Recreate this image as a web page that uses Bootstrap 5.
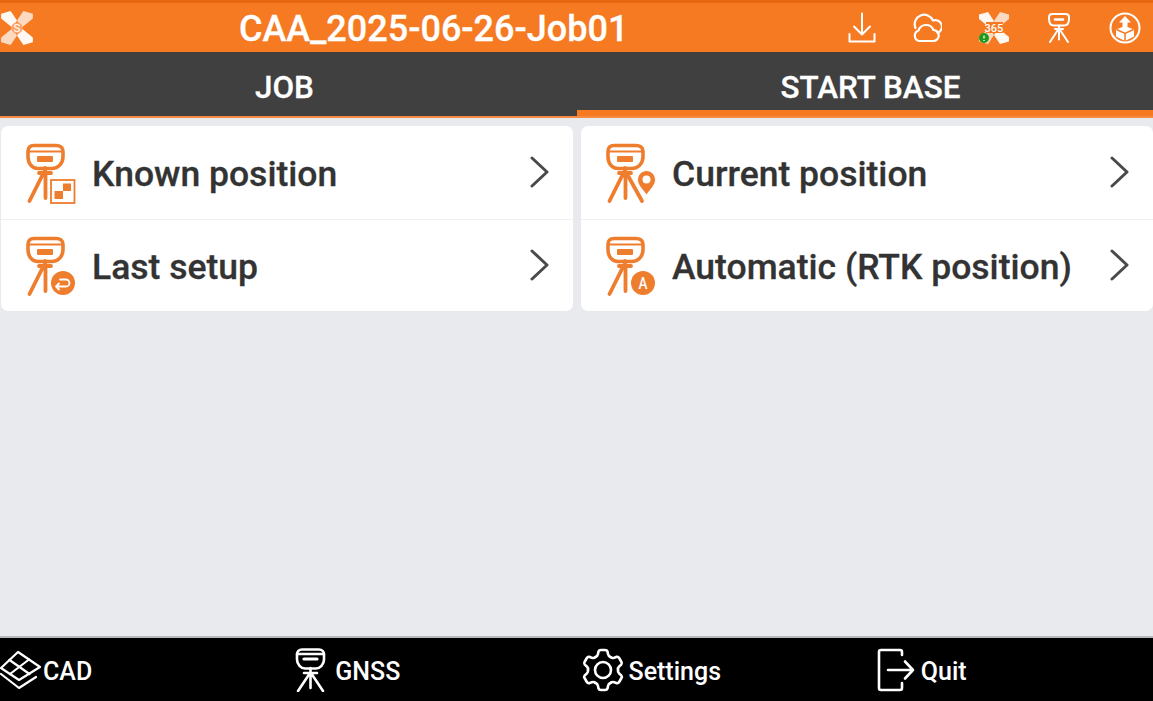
<!DOCTYPE html>
<html lang="en">
<head>
  <meta charset="UTF-8">
  <title>Start Base</title>
  <link href="https://cdn.jsdelivr.net/npm/bootstrap@5.3.0/dist/css/bootstrap.min.css" rel="stylesheet">
  <style>
    html, body { height: 100%; }
    body { font-family: Roboto, "Liberation Sans", sans-serif; background: #e9eaee; overflow: hidden; }
    .app-shell { height: 701px; }
    .top-bar { height: 52px; background: #f57a22; border-top: 3px solid #e8660f; color: #fff; }
    .top-logo { width: 34px; height: 36px; }
    .job-title { font-size: 36px; font-weight: 500; margin-left: 205px; padding-top: 3px; line-height: 1; -webkit-text-stroke: .3px #fff; }
    .top-icons { gap: 36px; margin-right: 11px; }
    .tab-bar { height: 66px; background: #404040; border-bottom: 2px solid #f58a42; color: #fff; }
    .tab-item { font-size: 31.4px; font-weight: 500; padding-top: 8px; -webkit-text-stroke: .3px #fff; }
    .tab-active { box-shadow: inset 0 -6px 0 #f57a22; flex: 0 0 576px; padding-left: 11px; }
    .tab-first { flex: 0 0 577px; padding-right: 8px; }
    .menu-area { gap: 8px; padding: 8px 0 0 1px; }
    .menu-card { flex: 0 0 572px; background: #fff; border-radius: 7px; height: 185px; }
    .menu-row { height: 92.5px; padding-left: 25px; padding-top: 3px; color: #333; }
    .menu-row + .menu-row { border-top: 1px solid #f0f0f2; }
    .row-label { font-size: 35.5px; font-weight: 500; margin-left: 16px; line-height: 1; padding-top: 1px; -webkit-text-stroke: .3px #333; }
    .row-arrow { margin-right: 24px; margin-bottom: 4px; }
    .bottom-bar { height: 65px; background: #000; border-top: 2px solid #b9b9bd; color: #fff; }
    .bottom-item { font-size: 25px; font-weight: 500; }
    .bottom-item span { padding-top: 5px; }
    .pad-gnss { padding-left: 7px; }
    .pad-settings { padding-left: 4px; }
    .pad-quit { padding-left: 12px; }
    .gap-wide { gap: 9px; }
    .gap-thin { gap: 1px; }
    .gap-gear { gap: 4px; }
    .gap-mid { gap: 6px; }
    .spacer-fill { flex: 1 1 auto; min-height: 0; }
  </style>
</head>
<body>
  <svg width="0" height="0" class="d-block">
    <defs>
      <!-- receiver on tripod, orange row icon base -->
      <symbol id="rover" viewBox="0 0 50 62">
        <g fill="none" stroke="#ee7d2e" stroke-linecap="round" stroke-linejoin="round">
          <path stroke-width="3.600" d="M8 2.500h22c4 0 7 2 7 6v5c0 7-5 12-11 12H12C6 25.500 2 20.500 2 13.500v-5c0-4 2-6 6-6z"/>
          <path stroke-width="2.200" d="M3 8.500h33"/>
          <path stroke-width="3.800" d="M19 25v5M13 30h12M17 31 3.500 58M19.500 31v24"/>
        </g>
        <rect x="11" y="13" width="16" height="6" rx="1" fill="#ee7d2e"/>
      </symbol>
      <symbol id="x-mark" viewBox="0 0 32 34">
        <g fill="#fff">
          <path d="M1 3.500 10 1l6 9-4.500 6.500L1 8z" fill-opacity=".95"/>
          <path d="M31 3.500 22 1l-6 9 4.500 6.500L31 8z" fill-opacity=".72"/>
          <path d="M1 30.500 10 33l6-9-4.500-6.500L1 26z" fill-opacity=".72"/>
          <path d="M31 30.500 22 33l-6-9 4.500-6.500L31 26z" fill-opacity=".95"/>
        </g>
      </symbol>
      <!-- one gear tooth, rotated six times -->
      <path id="gear-tooth" d="M14.500 9Q16.500 8.500 17 6L17.500 3.500Q18 2 20 2H24Q26 2 26.500 3.500L27 6Q27.500 8.500 29.500 9"/>
    </defs>
  </svg>

  <div class="app-shell d-flex flex-column">
    <!-- top bar -->
    <div class="top-bar d-flex align-items-center">
      <svg class="top-logo" viewBox="0 0 32 34">
        <use href="#x-mark"/>
        <circle cx="16" cy="17" r="5.500" fill="#f9a56c"/>
        <text x="16" y="21" font-size="11" fill="#fff" text-anchor="middle" font-family="Roboto">S</text>
      </svg>
      <div class="job-title">CAA_2025-06-26-Job01</div>
      <div class="top-icons d-flex align-items-center ms-auto">
        <svg width="28" height="32" viewBox="0 0 28 32" fill="none" stroke="#fff" stroke-width="2" stroke-linecap="round" stroke-linejoin="round"><path d="M14 1.500v21M6 14.500l8 8 8-8M1.500 22v7.500h25V22"/></svg>
        <svg width="30" height="30" viewBox="0 0 30 30" fill="none" stroke="#fff" stroke-width="2.200" stroke-linecap="round" stroke-linejoin="round"><path d="M3.500 15A9 9 0 0 1 21 7.500a6.500 6.500 0 0 1 4.500 12.500"/><path d="M7 28h14a5.500 5.500 0 0 0 .5-11 8 8 0 0 0-15 .5A5.500 5.500 0 0 0 7 28z"/></svg>
        <svg width="32" height="34" viewBox="0 0 32 34">
          <use href="#x-mark"/>
          <rect x="8" y="11" width="17" height="11" fill="#f57a22"/>
          <text x="16" y="20.500" font-size="11" font-weight="500" fill="#fff" text-anchor="middle" font-family="Roboto">365</text>
          <circle cx="6" cy="27" r="5" fill="#1e9a1e"/><path d="M6 24.500v3M6 29v1" stroke="#fff" stroke-width="1.300"/>
        </svg>
        <svg width="26" height="32" viewBox="0 0 26 32" fill="none" stroke="#fff" stroke-linecap="round" stroke-linejoin="round"><path stroke-width="2" d="M6.500 2h13c2 0 3.500 1 3.500 3v2c0 4-2 6.500-5 6.500H8C5 13.500 3 11 3 7V5c0-2 1.500-3 3.500-3z"/><path stroke-width="2.600" d="M9 7.500h8"/><path stroke-width="2" d="M13 13.500v14M12.500 17 4 30M13.500 17 22 30M9 17h8"/></svg>
        <svg width="34" height="32" viewBox="0 0 34 32" fill="none" stroke="#fff"><circle cx="17" cy="16" r="14.500" stroke-width="2"/><path d="M17 4l6 6.500h-3.500V15l6.500 2.500v7L17 29l-9-4.500v-7l6.500-2.500v-4.500H11z" fill="#fff" stroke="none"/><path d="M8.500 17.500l8.500 4 8.500-4M17 21.500V29" stroke="#f57a22" stroke-width="1.500"/></svg>
      </div>
    </div>

    <!-- tabs -->
    <div class="tab-bar d-flex">
      <div class="tab-item tab-first d-flex align-items-center justify-content-center">JOB</div>
      <div class="tab-item tab-active d-flex align-items-center justify-content-center">START BASE</div>
    </div>

    <!-- menu cards -->
    <div class="menu-area d-flex">
      <div class="menu-card">
        <div class="menu-row d-flex align-items-center">
          <svg width="50" height="62" viewBox="0 0 50 62"><use href="#rover"/><rect x="25" y="37" width="23.500" height="23" fill="#fff" stroke="#ee7d2e" stroke-width="1.800"/><rect x="37" y="40.500" width="8" height="7.500" fill="#ee7d2e"/><rect x="28.500" y="48" width="8.500" height="8" fill="#ee7d2e"/></svg>
          <span class="row-label">Known position</span>
          <svg class="row-arrow ms-auto" width="20" height="34" viewBox="0 0 20 34" fill="none" stroke="#4a4a4a" stroke-width="3" stroke-linecap="round" stroke-linejoin="round"><path d="M3 3l15 14L3 31"/></svg>
        </div>
        <div class="menu-row d-flex align-items-center">
          <svg width="50" height="62" viewBox="0 0 50 62"><use href="#rover"/><circle cx="37" cy="47" r="13" fill="#fff"/><circle cx="37" cy="47" r="12" fill="#ee7d2e"/><path d="M30 50.500h10a3.500 3.500 0 0 0 0-7h-6M33 47.500l-3 3 3 3" fill="none" stroke="#fff" stroke-width="1.800" stroke-linecap="round" stroke-linejoin="round"/></svg>
          <span class="row-label">Last setup</span>
          <svg class="row-arrow ms-auto" width="20" height="34" viewBox="0 0 20 34" fill="none" stroke="#4a4a4a" stroke-width="3" stroke-linecap="round" stroke-linejoin="round"><path d="M3 3l15 14L3 31"/></svg>
        </div>
      </div>
      <div class="menu-card">
        <div class="menu-row d-flex align-items-center">
          <svg width="50" height="62" viewBox="0 0 50 62"><use href="#rover"/><path d="M21 31l15 27" stroke="#ee7d2e" stroke-width="3.800" stroke-linecap="round"/><path d="M40.500 52c-5-7-9-10-9-15.500a9 9 0 0 1 18 0c0 5.500-4 8.500-9 15.500z" fill="#ee7d2e" stroke="#fff" stroke-width="1"/><circle cx="40.500" cy="36.500" r="4" fill="#fff"/></svg>
          <span class="row-label">Current position</span>
          <svg class="row-arrow ms-auto" width="20" height="34" viewBox="0 0 20 34" fill="none" stroke="#4a4a4a" stroke-width="3" stroke-linecap="round" stroke-linejoin="round"><path d="M3 3l15 14L3 31"/></svg>
        </div>
        <div class="menu-row d-flex align-items-center">
          <svg width="50" height="62" viewBox="0 0 50 62"><use href="#rover"/><circle cx="37" cy="47" r="13" fill="#fff"/><circle cx="37" cy="47" r="12" fill="#ee7d2e"/><text x="37" y="53" font-size="17" font-weight="500" fill="#fff" text-anchor="middle" font-family="Roboto" textLength="9" lengthAdjust="spacingAndGlyphs">A</text></svg>
          <span class="row-label">Automatic (RTK position)</span>
          <svg class="row-arrow ms-auto" width="20" height="34" viewBox="0 0 20 34" fill="none" stroke="#4a4a4a" stroke-width="3" stroke-linecap="round" stroke-linejoin="round"><path d="M3 3l15 14L3 31"/></svg>
        </div>
      </div>
    </div>

    <div class="spacer-fill"></div>

    <!-- bottom bar -->
    <div class="bottom-bar row g-0 align-items-center">
      <div class="col-3 bottom-item d-flex align-items-center gap-thin">
        <svg width="42" height="40" viewBox="0 0 42 40" fill="none" stroke="#fff" stroke-width="2.200" stroke-linejoin="round" stroke-linecap="round"><path d="M18 2 40 17 19 30 1 18z"/><path d="M9.500 10 29.500 24M29 9.500 10 24"/><path d="M1 24 19 38 36 27"/></svg>
        <span>CAD</span>
      </div>
      <div class="col-3 bottom-item pad-gnss d-flex align-items-center gap-wide">
        <svg width="31" height="44" viewBox="0 0 31 44" fill="none" stroke="#fff" stroke-linecap="round" stroke-linejoin="round"><path stroke-width="2.600" d="M7 1.500h17c3 0 5 2 5 5v5c0 5-4 9-8 9H10c-4 0-8-4-8-9v-5c0-3 2-5 5-5z"/><path stroke-width="3.200" d="M9 11h13"/><path stroke-width="2.600" d="M2 6h27M15.500 20v20M15 25 3 43M16 25l12 18M9 25h13"/></svg>
        <span>GNSS</span>
      </div>
      <div class="col-3 bottom-item pad-settings d-flex align-items-center gap-gear">
        <svg width="44" height="44" viewBox="0 0 44 44" fill="none" stroke="#fff" stroke-width="2.600" stroke-linecap="round" stroke-linejoin="round"><circle cx="22" cy="22" r="8"/><use href="#gear-tooth"/><use href="#gear-tooth" transform="rotate(60 22 22)"/><use href="#gear-tooth" transform="rotate(120 22 22)"/><use href="#gear-tooth" transform="rotate(180 22 22)"/><use href="#gear-tooth" transform="rotate(240 22 22)"/><use href="#gear-tooth" transform="rotate(300 22 22)"/></svg>
        <span>Settings</span>
      </div>
      <div class="col-3 bottom-item pad-quit d-flex align-items-center gap-mid">
        <svg width="38" height="44" viewBox="0 0 38 44" fill="none" stroke="#fff" stroke-width="2.600" stroke-linecap="round" stroke-linejoin="round"><path d="M25 7V4a2 2 0 0 0-2-2H4a2 2 0 0 0-2 2v36a2 2 0 0 0 2 2h19a2 2 0 0 0 2-2v-5"/><path d="M11 22h25M28 13.500l8 8.500-8 8.500"/></svg>
        <span>Quit</span>
      </div>
    </div>
  </div>

  <script src="https://cdn.jsdelivr.net/npm/bootstrap@5.3.0/dist/js/bootstrap.bundle.min.js"></script>
</body>
</html>
